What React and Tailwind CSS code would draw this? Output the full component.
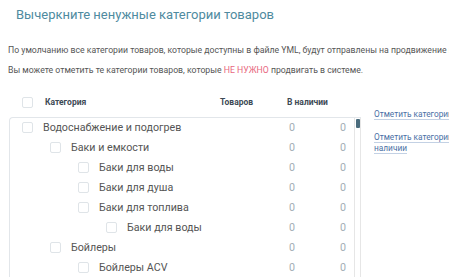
import React from 'react';

const rows = [
  { name: 'Водоснабжение и подогрев', level: 0 },
  { name: 'Баки и емкости', level: 1 },
  { name: 'Баки для воды', level: 2 },
  { name: 'Баки для душа', level: 2 },
  { name: 'Баки для топлива', level: 2 },
  { name: 'Баки для воды', level: 3 },
  { name: 'Бойлеры', level: 1 },
  { name: 'Бойлеры ACV', level: 2 },
];

const indent = ['pl-0', 'pl-[28px]', 'pl-[56px]', 'pl-[84px]'];

const Box = () => (
  <span className="inline-block w-[11px] h-[11px] shrink-0 rounded-[2px] border border-[#dfe4e8] bg-white" />
);

export default function App() {
  return (
    <div className="w-[449px] h-[277px] overflow-hidden bg-white font-['Roboto',sans-serif]">
      <div className="w-[640px]">
        <h1 className="pl-[16px] pt-[7px] text-[13px] leading-[16px] text-[#4f8ba0]">
          Вычеркните ненужные категории товаров
        </h1>

        <p className="pl-[8px] mt-[21px] text-[8.7px] leading-[12px] text-[#555]">
          По умолчанию все категории товаров, которые доступны в файле YML, будут отправлены на продвижение в системе.
        </p>
        <p className="pl-[8px] mt-[8px] text-[8.7px] leading-[12px] text-[#555]">
          Вы можете отметить те категории товаров, которые <span className="text-[#e8687e]">НЕ НУЖНО</span> продвигать в системе.
        </p>

        <div className="flex mt-[16px]">
          <div className="w-[352px] ml-[9px] shrink-0">
            {/* header */}
            <div className="flex items-center h-[20px] pl-[13px] text-[8.5px] font-bold text-[#3d4a55]">
              <Box />
              <span className="ml-[12px] w-[175px]">Категория</span>
              <span className="w-[67px]">Товаров</span>
              <span>В наличии</span>
            </div>

            {/* tree */}
            <div className="flex mt-[5px] border-l border-t border-[#e2e6ea] rounded-tl-[4px]">
              <div className="flex-1">
                {rows.map((r, i) => (
                  <div key={i} className="flex items-center h-[20px] pl-[12px] pr-[8px] text-[10.7px] text-[#555]">
                    <div className={`flex items-center flex-1 ${indent[r.level]}`}>
                      <Box />
                      <span className="ml-[10px]">{r.name}</span>
                    </div>
                    <span className="w-[40px] text-right text-[#a3aeb6]">0</span>
                    <span className="w-[51px] text-right text-[#a3aeb6]">0</span>
                  </div>
                ))}
              </div>
              <div className="w-[7px] border-l border-r border-[#e6e6e6] flex justify-center">
                <div className="w-[4px] h-[9px] mt-[1px] rounded-[1px] bg-[#4a6c7d]" />
              </div>
            </div>
          </div>

          <div className="ml-[13px] w-[108px] pt-[17px] text-[8.3px] leading-[11px] text-[#4a6fa5]">
            <div className="whitespace-nowrap">
              <span className="underline decoration-[#c3d1e4] underline-offset-2">Отметить категории без товаров</span>
            </div>
            <div className="mt-[12px]">
              <span className="underline decoration-[#c3d1e4] underline-offset-2">Отметить категории не в наличии</span>
            </div>
          </div>
        </div>
      </div>
    </div>
  );
}
